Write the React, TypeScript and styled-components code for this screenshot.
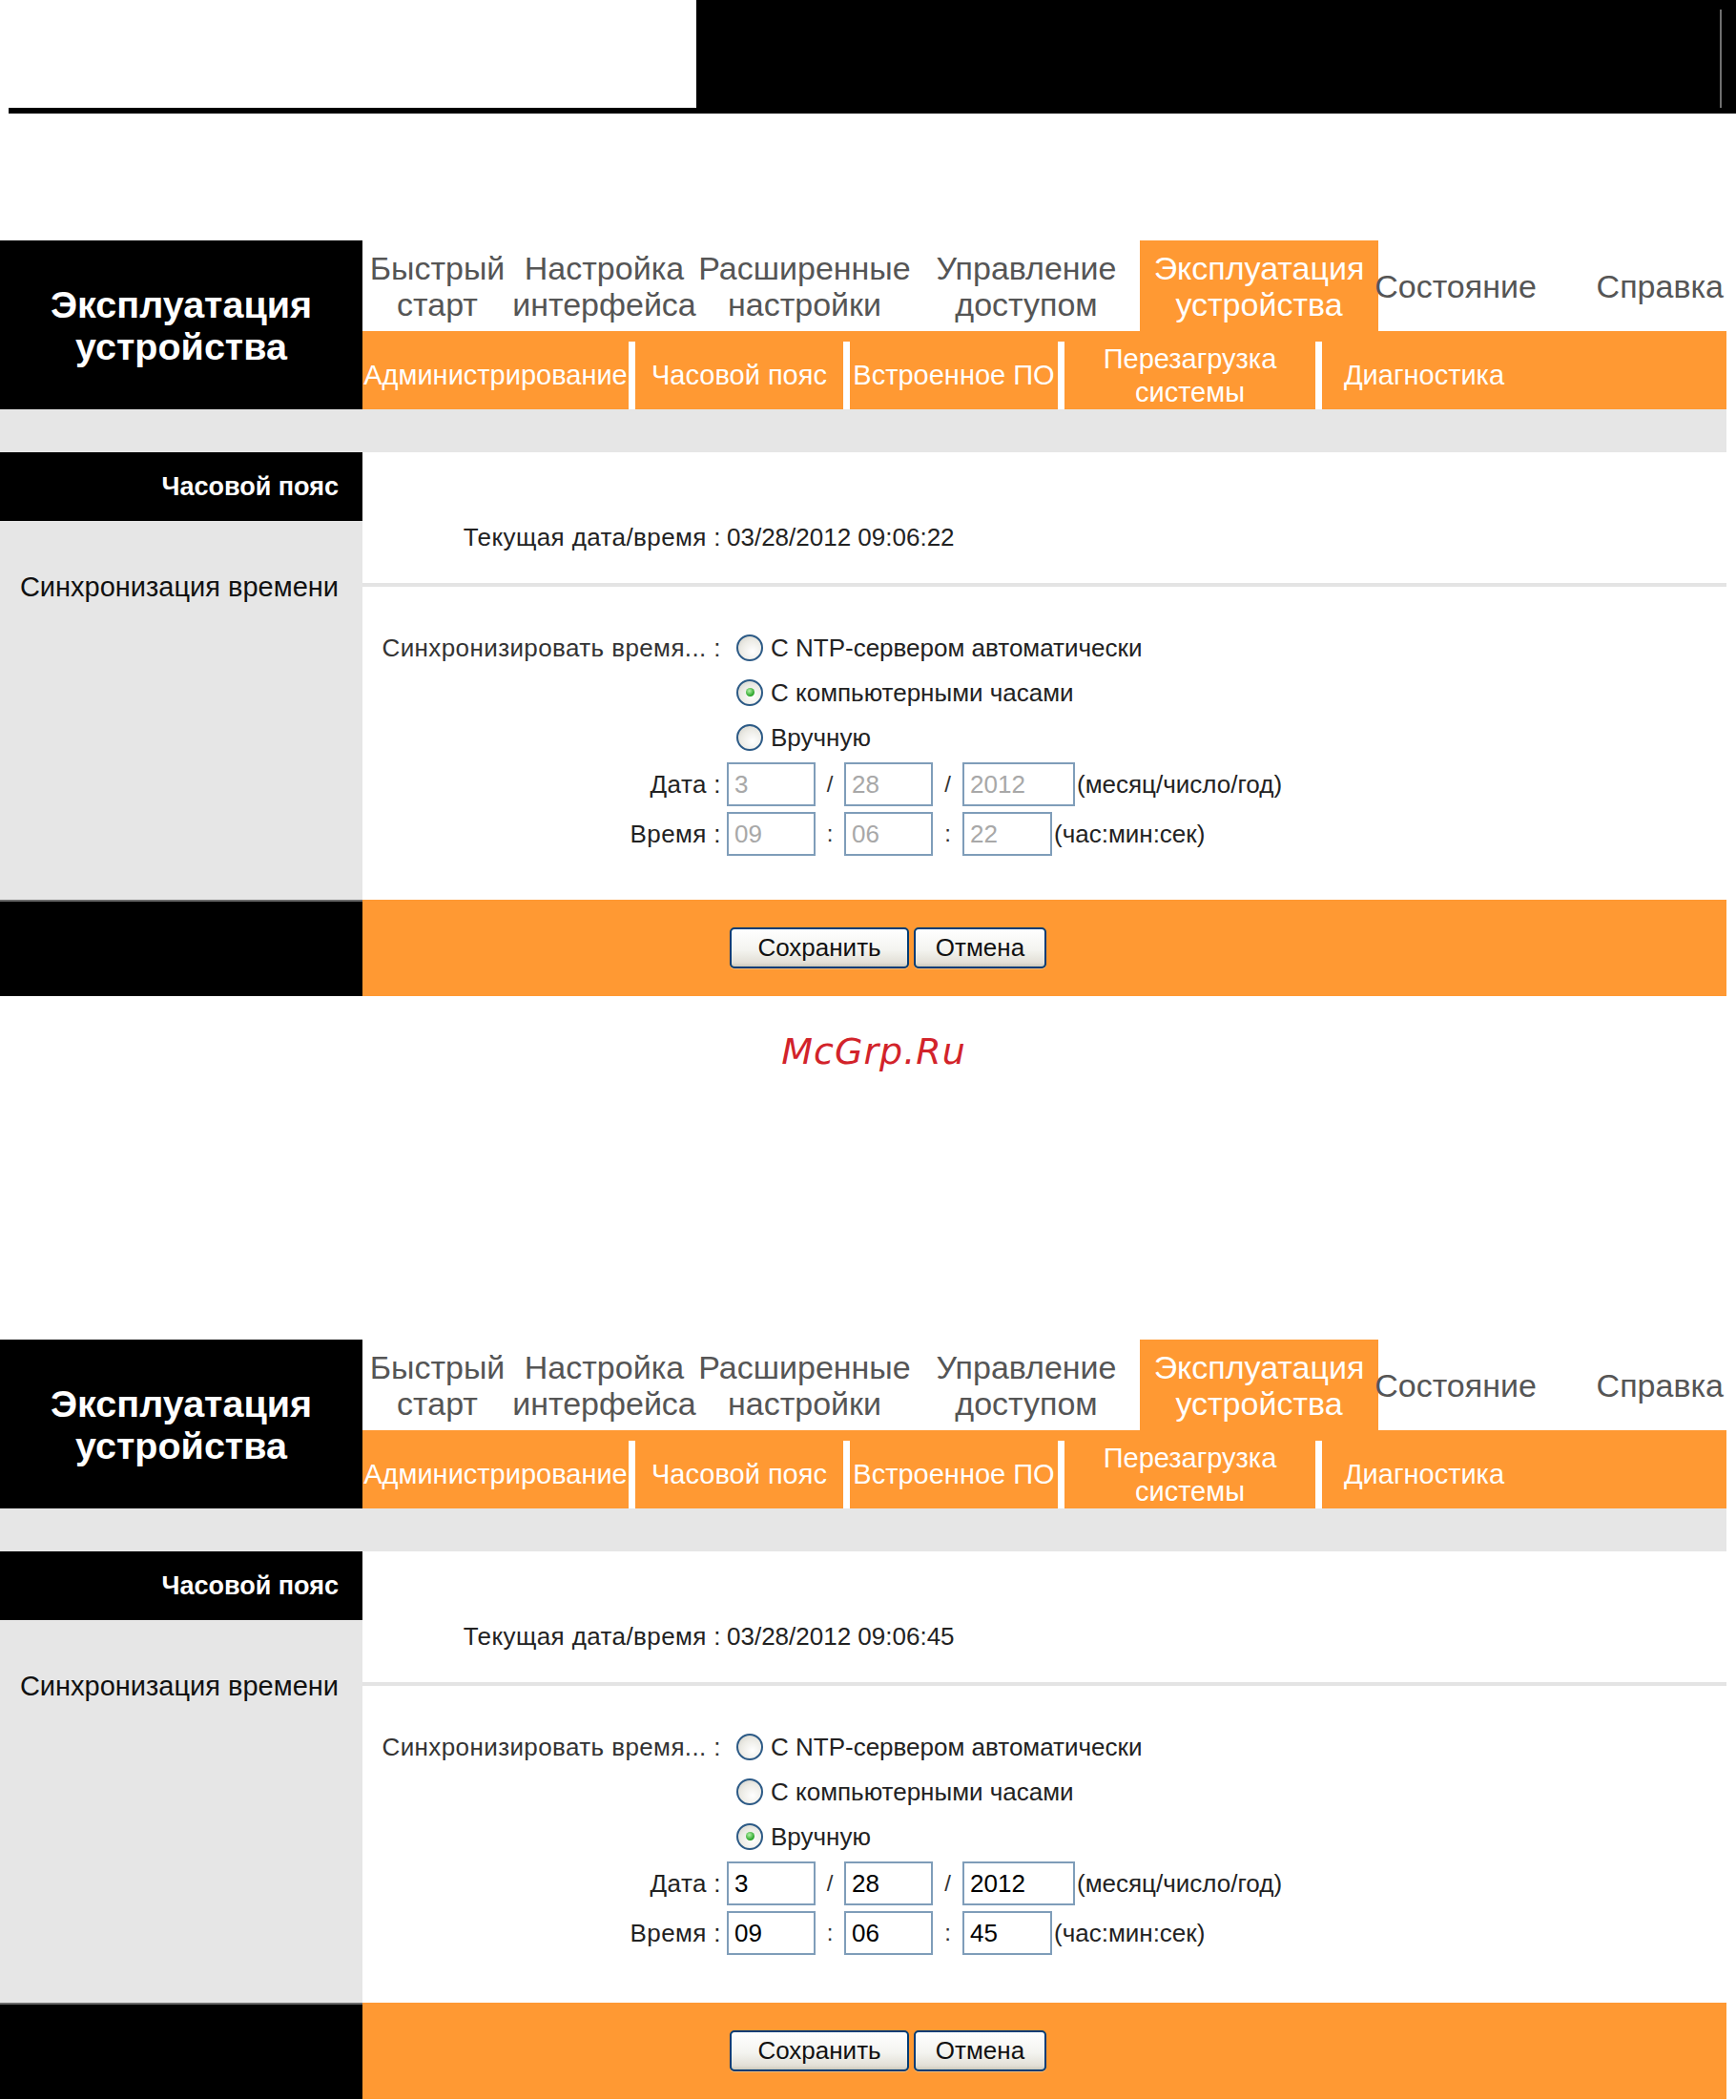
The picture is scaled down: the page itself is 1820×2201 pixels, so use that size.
import React from 'react';
import styled, { createGlobalStyle } from 'styled-components';

// --- Data ---
const ORANGE = '#ff9933';
const GRAY = '#e6e6e6';

const mainTabs = [
  { label: ['Быстрый', 'старт'], w: 157 },
  { label: ['Настройка', 'интерфейса'], w: 193 },
  { label: ['Расширенные', 'настройки'], w: 227 },
  { label: ['Управление', 'доступом'], w: 238 },
  { label: ['Эксплуатация', 'устройства'], w: 250, active: true },
  { label: ['Состояние'], w: 162 },
  { label: ['Справка'] },
];

const subTabs = [
  { label: ['Администрирование'], w: 286 },
  { label: ['Часовой пояс'], w: 225 },
  { label: ['Встроенное ПО'], w: 225 },
  { label: ['Перезагрузка', 'системы'], w: 270 },
  { label: ['Диагностика'], w: 214, last: true },
];

const syncModes = ['С NTP-сервером автоматически', 'С компьютерными часами', 'Вручную'];

// second screenshot is captured a touch taller, hence the content height
const panels = [
  { now: '03/28/2012 09:06:22', mode: 1, editable: false, h: 469, date: ['3', '28', '2012'], time: ['09', '06', '22'] },
  { now: '03/28/2012 09:06:45', mode: 2, editable: true, h: 473, date: ['3', '28', '2012'], time: ['09', '06', '45'] },
];

type PanelData = (typeof panels)[number];

// --- Styled Components ---
const GlobalStyle = createGlobalStyle`
  html, body {
    margin: 0;
    padding: 0;
    background: #fff;
  }
  body {
    font-family: "Liberation Sans", Arial, sans-serif;
  }
`;

const Page = styled.div`
  width: 1820px;
  min-height: 2201px;
  display: flex;
  flex-direction: column;
`;

const Banner = styled.div`
  display: flex;
  height: 119px;
`;

const BannerLogo = styled.div`
  width: 721px;
  margin-left: 9px;
  height: 113px;
  border-bottom: 6px solid #000;
  background: #fff;
`;

const BannerDark = styled.div`
  flex: 1;
  background: #000;
  display: flex;
  justify-content: flex-end;
  padding: 10px 15px 6px 0;
`;

const BannerRule = styled.div`
  width: 2px;
  background: #6f6f6f;
`;

const Panel = styled.div<{ $top: number }>`
  margin-top: ${p => p.$top}px;
  width: 1810px;
  display: grid;
  grid-template-columns: 380px 1fr;
`;

const TitleCell = styled.div`
  background: #000;
  color: #fff;
  font-weight: 700;
  font-size: 39.5px;
  line-height: 44px;
  display: flex;
  flex-direction: column;
  align-items: center;
  justify-content: center;
  text-align: center;
  white-space: nowrap;
`;

const NavStack = styled.div`
  display: flex;
  flex-direction: column;
`;

const TopNav = styled.div`
  display: flex;
  height: 95px;
  background: #fff;
`;

const NavTab = styled.div<{ $w?: number; $active?: boolean }>`
  ${p => (p.$w ? `width: ${p.$w}px; flex: none;` : 'flex: 1;')}
  display: flex;
  flex-direction: column;
  align-items: ${p => (p.$w ? 'center' : 'flex-end')};
  justify-content: center;
  padding-right: ${p => (p.$w ? 0 : 3)}px;
  text-align: center;
  white-space: nowrap;
  font-size: 34px;
  line-height: 38px;
  color: ${p => (p.$active ? '#fff' : '#555')};
  background: ${p => (p.$active ? ORANGE : 'transparent')};
`;

const SubNav = styled.div`
  display: flex;
  height: 82px;
  box-sizing: border-box;
  padding-top: 11px;
  background: ${ORANGE};
`;

const SubTab = styled.div<{ $w: number; $last?: boolean }>`
  width: ${p => p.$w}px;
  flex: none;
  box-sizing: border-box;
  border-right: ${p => (p.$last ? 'none' : '7px solid #fff')};
  display: flex;
  flex-direction: column;
  align-items: center;
  justify-content: center;
  text-align: center;
  white-space: nowrap;
  color: #fff;
  font-size: 29px;
  line-height: 35px;
`;

const Line = styled.span`
  display: block;
`;

const GrayStrip = styled.div`
  grid-column: 1 / -1;
  height: 45px;
  background: ${GRAY};
`;

const Side = styled.div`
  background: ${GRAY};
  display: flex;
  flex-direction: column;
`;

const SideHead = styled.div`
  height: 72px;
  background: #000;
  color: #fff;
  font-weight: 700;
  font-size: 27px;
  display: flex;
  align-items: center;
  justify-content: flex-end;
  padding-right: 25px;
`;

const SideLabel = styled.div`
  margin-top: 52px;
  padding-right: 25px;
  text-align: right;
  font-size: 29px;
  line-height: 34px;
  color: #111;
`;

const Content = styled.div<{ $h: number }>`
  background: #fff;
  height: ${p => p.$h}px;
  display: flex;
  flex-direction: column;
`;

const InfoBlock = styled.div`
  height: 137px;
  box-sizing: border-box;
  padding-top: 72px;
`;

const Divider = styled.div`
  height: 4px;
  background: #e4e4e4;
`;

const FormBlock = styled.div`
  padding-top: 40px;
`;

const FieldRow = styled.div<{ $h: number }>`
  display: grid;
  grid-template-columns: 382px 1fr;
  align-items: center;
  height: ${p => p.$h}px;
  font-size: 26px;
  line-height: 34px;
  color: #333;
  white-space: nowrap;
`;

const FieldLabel = styled.div<{ $dark?: boolean }>`
  text-align: right;
  padding-right: 6px;
  letter-spacing: 0.4px;
  color: ${p => (p.$dark ? '#222' : '#333')};
`;

const FieldValue = styled.div`
  display: flex;
  align-items: center;
  color: #222;
`;

const RadioDot = styled.span<{ $checked?: boolean }>`
  width: 28px;
  height: 28px;
  margin: 0 8px 0 10px;
  flex: none;
  box-sizing: border-box;
  border-radius: 50%;
  border: 2px solid #2c5a86;
  background: radial-gradient(circle at 62% 66%, #ffffff 0%, #ecebe5 55%, #cfcec6 100%);
  display: inline-flex;
  align-items: center;
  justify-content: center;

  &::after {
    content: '';
    width: 9px;
    height: 9px;
    border-radius: 50%;
    background: ${p => (p.$checked ? 'radial-gradient(circle at 40% 35%, #b4f2a8, #22a022 70%)' : 'transparent')};
  }
`;

const TimeInput = styled.input<{ $w: number; $muted?: boolean }>`
  width: ${p => p.$w}px;
  height: 46px;
  box-sizing: border-box;
  border: 2px solid #7f9db9;
  padding: 0 6px;
  margin: 0;
  background: #fff;
  font-family: "Liberation Sans", Arial, sans-serif;
  font-size: 26px;
  color: ${p => (p.$muted ? '#a8a8a8' : '#000')};
  outline: none;
`;

const Sep = styled.span<{ $w: number }>`
  width: ${p => p.$w}px;
  text-align: center;
  font-size: 24px;
  color: #333;
`;

const Hint = styled.span`
  margin-left: 2px;
  color: #222;
`;

const FootSide = styled.div`
  height: 101px;
  box-sizing: border-box;
  background: #000;
  border-top: 2px solid #6a6a6a;
`;

const FootBar = styled.div`
  height: 101px;
  box-sizing: border-box;
  background: ${ORANGE};
  display: flex;
  align-items: center;
  gap: 5px;
  padding-left: 385px;
`;

const XpButton = styled.button<{ $w: number }>`
  width: ${p => p.$w}px;
  height: 43px;
  box-sizing: border-box;
  border: 2px solid #003c74;
  border-radius: 5px;
  background: linear-gradient(180deg, #ffffff 0%, #f4f4f0 55%, #e2dfd6 90%, #cdc9bb 100%);
  box-shadow: 0 1px 0 rgba(255, 255, 255, 0.35);
  font-family: "Liberation Sans", Arial, sans-serif;
  font-size: 26px;
  color: #111;
  padding: 0;
`;

const Watermark = styled.div`
  margin-top: 36px;
  padding-left: 12px;
  text-align: center;
  font-family: "DejaVu Sans", "Liberation Sans", sans-serif;
  font-style: italic;
  font-size: 38px;
  line-height: 44px;
  letter-spacing: 1px;
  color: #d2232a;
`;

const TimePanel: React.FC<{ data: PanelData; top: number }> = ({ data, top }) => (
  <Panel $top={top}>
    <TitleCell>
      <Line>Эксплуатация</Line>
      <Line>устройства</Line>
    </TitleCell>
    <NavStack>
      <TopNav>
        {mainTabs.map((tab, i) => (
          <NavTab key={i} $w={tab.w} $active={!!tab.active}>
            {tab.label.map((l, j) => (
              <Line key={j}>{l}</Line>
            ))}
          </NavTab>
        ))}
      </TopNav>
      <SubNav>
        {subTabs.map((tab, i) => (
          <SubTab key={i} $w={tab.w} $last={!!tab.last}>
            {tab.label.map((l, j) => (
              <Line key={j}>{l}</Line>
            ))}
          </SubTab>
        ))}
      </SubNav>
    </NavStack>

    <GrayStrip />

    <Side>
      <SideHead>Часовой пояс</SideHead>
      <SideLabel>Синхронизация времени</SideLabel>
    </Side>
    <Content $h={data.h}>
      <InfoBlock>
        <FieldRow $h={34}>
          <FieldLabel $dark>Текущая дата/время :</FieldLabel>
          <FieldValue>{data.now}</FieldValue>
        </FieldRow>
      </InfoBlock>
      <Divider />
      <FormBlock>
        {syncModes.map((mode, i) => (
          <FieldRow key={i} $h={47}>
            <FieldLabel>{i === 0 ? 'Синхронизировать время... :' : ''}</FieldLabel>
            <FieldValue>
              <RadioDot $checked={data.mode === i} />
              {mode}
            </FieldValue>
          </FieldRow>
        ))}
        <FieldRow $h={52}>
          <FieldLabel $dark>Дата :</FieldLabel>
          <FieldValue>
            <TimeInput $w={93} $muted={!data.editable} value={data.date[0]} readOnly />
            <Sep $w={30}>/</Sep>
            <TimeInput $w={93} $muted={!data.editable} value={data.date[1]} readOnly />
            <Sep $w={31}>/</Sep>
            <TimeInput $w={118} $muted={!data.editable} value={data.date[2]} readOnly />
            <Hint>(месяц/число/год)</Hint>
          </FieldValue>
        </FieldRow>
        <FieldRow $h={52}>
          <FieldLabel $dark>Время :</FieldLabel>
          <FieldValue>
            <TimeInput $w={93} $muted={!data.editable} value={data.time[0]} readOnly />
            <Sep $w={30}>:</Sep>
            <TimeInput $w={93} $muted={!data.editable} value={data.time[1]} readOnly />
            <Sep $w={31}>:</Sep>
            <TimeInput $w={94} $muted={!data.editable} value={data.time[2]} readOnly />
            <Hint>(час:мин:сек)</Hint>
          </FieldValue>
        </FieldRow>
      </FormBlock>
    </Content>

    <FootSide />
    <FootBar>
      <XpButton $w={188}>Сохранить</XpButton>
      <XpButton $w={139}>Отмена</XpButton>
    </FootBar>
  </Panel>
);

export default function App() {
  return (
    <>
      <GlobalStyle />
      <Page>
        <Banner>
          <BannerLogo />
          <BannerDark>
            <BannerRule />
          </BannerDark>
        </Banner>
        <TimePanel data={panels[0]} top={133} />
        <Watermark>McGrp.Ru</Watermark>
        <TimePanel data={panels[1]} top={280} />
      </Page>
    </>
  );
}
